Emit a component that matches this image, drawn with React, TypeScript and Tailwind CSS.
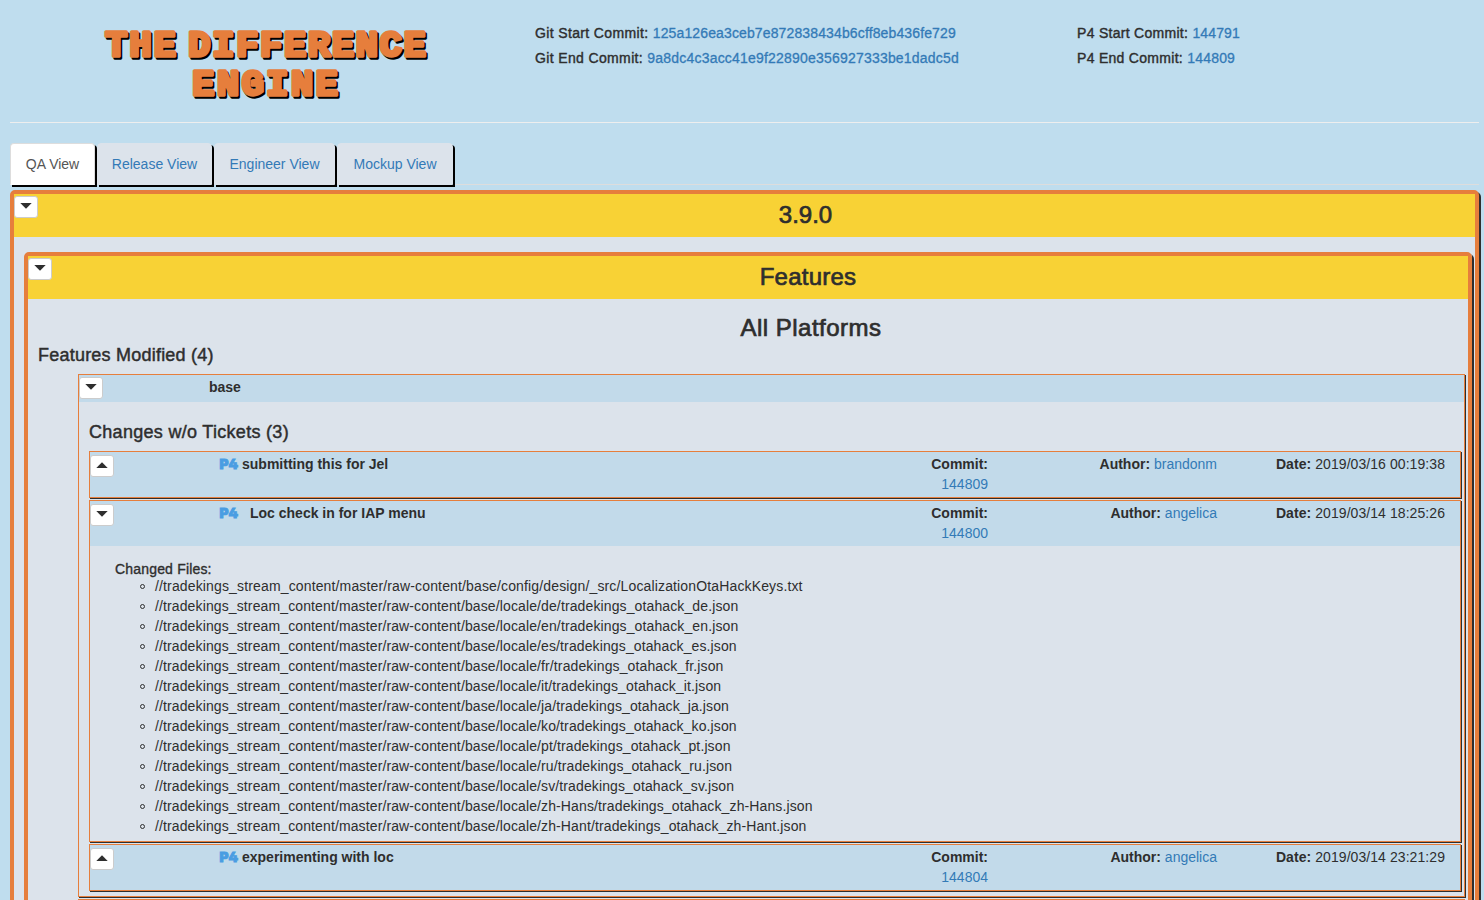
import type { ReactNode } from "react";

const files = [
  "config/design/_src/LocalizationOtaHackKeys.txt",
  "locale/de/tradekings_otahack_de.json",
  "locale/en/tradekings_otahack_en.json",
  "locale/es/tradekings_otahack_es.json",
  "locale/fr/tradekings_otahack_fr.json",
  "locale/it/tradekings_otahack_it.json",
  "locale/ja/tradekings_otahack_ja.json",
  "locale/ko/tradekings_otahack_ko.json",
  "locale/pt/tradekings_otahack_pt.json",
  "locale/ru/tradekings_otahack_ru.json",
  "locale/sv/tradekings_otahack_sv.json",
  "locale/zh-Hans/tradekings_otahack_zh-Hans.json",
  "locale/zh-Hant/tradekings_otahack_zh-Hant.json",
];

function Toggle({ up = false }: { up?: boolean }) {
  return (
    <button className="flex h-[22px] w-6 shrink-0 items-start justify-center rounded-[3px] border border-[#ccc] bg-white pt-[6px]">
      <svg width="12" height="6" viewBox="0 0 12 6" fill="#2e2e2e">
        <path d={up ? "M0.3 6 6 0.2 11.7 6z" : "M0.3 0h11.4L6 5.8z"} />
      </svg>
    </button>
  );
}

function Logo() {
  return (
    <svg width="350" height="96" viewBox="0 0 350 96" className="font-['Liberation_Mono',monospace] font-bold">
      {[
        { color: "#000", d: 1.6 },
        { color: "#e67e3c", d: 0 },
      ].map(({ color, d }) => (
        <g key={color} fill={color} stroke={color} strokeWidth="3.4" strokeLinejoin="round" fontSize="37.5" aria-hidden={d > 0}>
          <text x={8 + d} y={35 + d} textLength="71">THE</text>
          <text x={91 + d} y={35 + d} textLength="238">DIFFERENCE</text>
          <text x={95 + d} y={74 + d} textLength="146">ENGINE</text>
        </g>
      ))}
    </svg>
  );
}

function P4() {
  return (
    <svg width="22" height="20" viewBox="0 0 22 20" className="mt-[2px] -mr-[2px] shrink-0 font-['Inter',sans-serif] font-black [font-feature-settings:'cv02']">
      <text x="0.5" y="15" fontSize="12.5" textLength="18.5" lengthAdjust="spacingAndGlyphs" fill="#4a9de2" stroke="#4a9de2" strokeWidth="0.9">P4</text>
    </svg>
  );
}

function A({ children, className = "" }: { children: ReactNode; className?: string }) {
  return <a className={`text-[#337ab7] ${className}`}>{children}</a>;
}

type ChangeProps = {
  title: string;
  indent?: boolean;
  commit: string;
  author: string;
  date: string;
  children?: ReactNode;
};

function Change({ title, indent, commit, author, date, children }: ChangeProps) {
  return (
    <section className="border border-[#e67e3c] shadow-[1px_1px_0_#2e2e2e]">
      <div className="flex h-[45px] bg-[#c2daea] pr-[15px]">
        <div className="w-[129px] pt-[3px]"><Toggle up={!children} /></div>
        <P4 />
        <b className={`flex-1 pt-[2px] ${indent ? "pl-[11px]" : "pl-[3px]"}`}>{title}</b>
        <div className="w-[120px] pt-[2px] text-right"><b>Commit:</b><br /><A>{commit}</A></div>
        <div className="w-[229px] pt-[2px] text-right"><b>Author:</b> <A>{author}</A></div>
        <div className="w-[228px] pt-[2px] text-right tracking-[0.07px]"><b>Date:</b> {date}</div>
      </div>
      {children}
    </section>
  );
}

function Banner({ children, className = "" }: { children: string; className?: string }) {
  return (
    <div className="flex h-[43px] bg-[#f8d235] pt-[2px]">
      <Toggle />
      <h2 className={`flex-1 text-center text-[24px] leading-[38px] [-webkit-text-stroke:0.7px] ${className}`}>{children}</h2>
    </div>
  );
}

function Range({ system, start, end, className }: { system: string; start: string; end: string; className: string }) {
  return (
    <div className={`flex flex-col gap-[5px] pt-[23px] [-webkit-text-stroke:0.4px] ${className}`}>
      <div>{system} Start Commit: <A className="tracking-[0.13px] [-webkit-text-stroke:0.3px]">{start}</A></div>
      <div>{system} End Commit: <A className="tracking-[0.2px] [-webkit-text-stroke:0.3px]">{end}</A></div>
    </div>
  );
}

const tabs = [
  { name: "QA View", width: "w-[85px]" },
  { name: "Release View", width: "w-[115px]" },
  { name: "Engineer View", width: "w-[121px]" },
  { name: "Mockup View", width: "w-[116px]" },
];

export default function App() {
  return (
    <div className="h-[900px] w-[1484px] overflow-hidden bg-[#bfddee] font-['Liberation_Sans',sans-serif] text-[14px] leading-5 whitespace-nowrap text-[#2e2e2e]">
      <header className="ml-[10px] flex h-[123px] w-[1469px] border-b border-[#eee]">
        <div className="w-[525px] pt-[21px] pl-[87px]"><Logo /></div>
        <Range system="Git" start="125a126ea3ceb7e872838434b6cff8eb436fe729" end="9a8dc4c3acc41e9f22890e356927333be1dadc5d" className="w-[542px] tracking-[0.36px]" />
        <Range system="P4" start="144791" end="144809" className="tracking-[0.29px]" />
      </header>
      <nav className="mt-5 ml-[10px] flex h-[42px] w-[1469px] gap-[2px] border-b border-[#ddd]">
        {tabs.map((t, i) => (
          <a
            key={t.name}
            className={`h-[42px] shrink-0 rounded-t-[4px] border pt-[10px] text-center shadow-[2px_2px_0_#000] ${t.width} ${i === 0 ? "border-[#ddd] border-b-white bg-white text-[#555]" : "border-[#dce3eb] bg-[#dce3eb] text-[#337ab7]"}`}
          >
            {t.name}
          </a>
        ))}
      </nav>
      <section className="mt-[5px] ml-[10px] h-[760px] w-[1469px] rounded-[5px] border-4 border-[#e67e3c] bg-[#dce3eb] shadow-[2px_2px_0_#2e2e2e]">
        <Banner className="pl-[98px]">3.9.0</Banner>
        <section className="mt-[15px] mr-[3px] ml-[10px] h-[720px] rounded-[5px] border-4 border-[#e67e3c] shadow-[2px_2px_0_#2e2e2e]">
          <Banner className="pl-[96px] tracking-[0.25px]">Features</Banner>
          <h2 className="mt-[14px] pl-[126px] text-center text-[24px] leading-[29px] tracking-[0.5px] [-webkit-text-stroke:0.7px]">All Platforms</h2>
          <h3 className="mt-[3px] pl-[10px] text-[18px] leading-5 tracking-[0.22px] [-webkit-text-stroke:0.45px]">Features Modified (4)</h3>
          <section className="mt-[9px] mr-[3px] ml-[50px] border border-[#e67e3c] pb-[5px] shadow-[1px_1px_0_#2e2e2e]">
            <div className="flex h-[27px] bg-[#c2daea] pt-[2px]">
              <div className="w-[130px]"><Toggle /></div>
              <b>base</b>
            </div>
            <h3 className="mt-5 ml-[10px] text-[18px] leading-5 tracking-[0.3px] [-webkit-text-stroke:0.45px]">Changes w/o Tickets (3)</h3>
            <div className="mt-[9px] mr-[3px] ml-[10px] flex flex-col gap-[2px]">
              <Change title="submitting this for Jel" commit="144809" author="brandonm" date="2019/03/16 00:19:38" />
              <Change title="Loc check in for IAP menu" indent commit="144800" author="angelica" date="2019/03/14 18:25:26">
                <div className="h-[295px] pt-[13px] pl-[25px]">
                  <div className="h-[17px] tracking-[0.18px] [-webkit-text-stroke:0.35px]">Changed Files:</div>
                  <ul className="tracking-[0.12px]">
                    {files.map((f, i) => (
                      <li key={f} className={`flex items-center ${i === 0 ? "tracking-[0.145px]" : ""}`}>
                        <span className="mt-px mr-[10px] ml-[25px] h-[5px] w-[5px] rounded-full border border-[#2e2e2e]" />
                        //tradekings_stream_content/master/raw-content/base/{f}
                      </li>
                    ))}
                  </ul>
                </div>
              </Change>
              <Change title="experimenting with loc" commit="144804" author="angelica" date="2019/03/14 23:21:29" />
            </div>
          </section>
          <section className="mt-[2px] mr-[3px] ml-[50px] h-[30px] border border-[#e67e3c] bg-[#c2daea]" />
        </section>
      </section>
    </div>
  );
}
